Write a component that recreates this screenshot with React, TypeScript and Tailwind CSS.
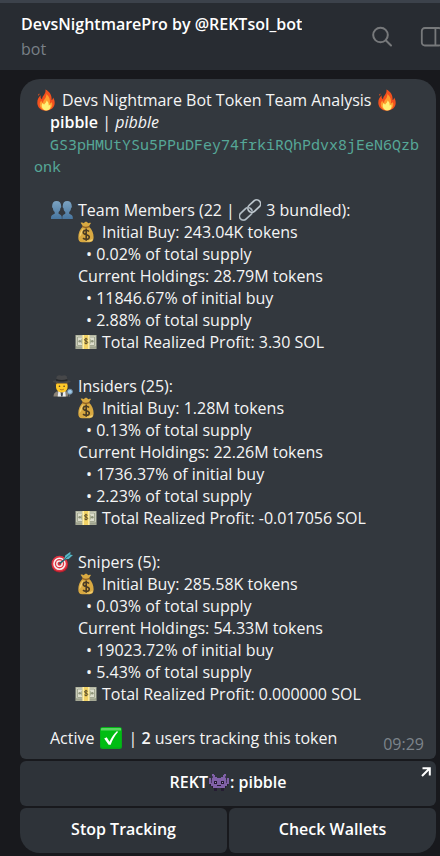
import React from 'react';

interface IconProps {
  className?: string;
}

const Fire: React.FC<IconProps> = ({ className = '' }) => (
  <svg viewBox="0 0 22 22" aria-hidden="true" className={`inline-block h-[22px] w-[22px] shrink-0 ${className}`}>
    <path d="M10.4 0.6c0.6 2.6-0.6 4.3-2 6.2C7.5 8 7 9 7.100 10.300 5.600 9.600 5.300 8 5.800 6.300 3.600 8 2.200 10.700 2.300 14c0.100 4.500 3.700 7.700 8.700 7.700s8.700-3.300 8.700-7.900c0-2.300-0.700-4-1.700-5.400 0 1.300-0.500 2.200-1.400 2.700C17 6.600 14.800 2.700 10.400 0.600z" fill="#f4511e" />
    <path d="M11.300 5c0.500 2.600-1.200 4.400-2.500 6.300-0.500 0.800-0.800 1.700-0.700 2.600-1-0.400-1.600-1.200-1.700-2.300-1.200 1.300-1.700 2.700-1.600 4.200 0.200 3.400 2.900 5.500 6.300 5.500 3.500 0 6.200-2.300 6.200-5.700 0-1-0.200-1.800-0.600-2.500-0.400 0.900-1 1.300-1.900 1.500C15.500 11 14.400 7.300 11.300 5z" fill="#ff9d2e" />
    <path d="M11.500 11.500c0.100 2-1.500 2.700-2.200 4-0.900-0.200-1.300-0.700-1.500-1.400-0.900 1.200-1.200 2.200-1 3.400 0.400 2.400 2 3.900 4.400 3.900s4.300-1.600 4.300-4c0-0.800-0.100-1.300-0.300-1.800-0.400 0.600-0.900 0.900-1.500 0.800 0.200-2-0.600-3.900-2.200-4.900z" fill="#fff176" />
    <path d="M4.300 4.400c0.500 1-0.200 1.500-0.800 2.300C3 5.900 3.300 5 4.300 4.400z" fill="#f4511e" />
  </svg>
);

const People: React.FC<IconProps> = ({ className = '' }) => (
  <svg viewBox="0 0 22 22" aria-hidden="true" className={`inline-block h-[22px] w-[22px] shrink-0 ${className}`}>
    <defs>
      <linearGradient id="people" x1="0" y1="0" x2="0" y2="1">
        <stop offset="0" stopColor="#7ba2c1" />
        <stop offset="1" stopColor="#47759f" />
      </linearGradient>
    </defs>
    <path d="M11.300 20v-1.600c0-2 .8-2.800 3-3.700v-1.600c-1.200-1-1.600-2.300-1.800-3.900-.6-.3-.9-1-.8-1.900.1-3.500 1.700-5.200 4.500-5.200s4.500 1.700 4.600 5.200c.1.900-.2 1.600-.8 1.900-.2 1.600-.6 2.900-1.800 3.900v1.600c2.400.9 3.600 1.700 3.600 3.700V20z" fill="url(#people)" />
    <path d="M0 20v-1.600c0-2 1.300-2.800 3.700-3.700v-1.600c-1.200-1-1.600-2.300-1.800-3.900-.6-.3-.9-1-.8-1.900.1-3.500 1.700-5.200 4.500-5.200s4.500 1.700 4.600 5.200c.1.900-.2 1.600-.8 1.900-.2 1.600-.6 2.900-1.800 3.900v1.600c2.200.9 3.200 1.700 3.200 3.700V20z" fill="url(#people)" />
  </svg>
);

const LinkChain: React.FC<IconProps> = ({ className = '' }) => (
  <svg viewBox="0 0 22 22" aria-hidden="true" className={`inline-block h-[22px] w-[22px] shrink-0 ${className}`}>
    <g fill="none" transform="rotate(-43 11 11)">
      <rect x="-2" y="7" width="14.500" height="8" rx="4" stroke="#737c83" strokeWidth="2" />
      <rect x="-2" y="7" width="14.500" height="8" rx="4" stroke="#b7c1c9" strokeWidth="1.200" />
      <rect x="9.500" y="7" width="14.500" height="8" rx="4" stroke="#737c83" strokeWidth="2" />
      <rect x="9.500" y="7" width="14.500" height="8" rx="4" stroke="#c5cdd4" strokeWidth="1.200" />
    </g>
  </svg>
);

const MoneyBag: React.FC<IconProps> = ({ className = '' }) => (
  <svg viewBox="0 0 22 22" aria-hidden="true" className={`inline-block h-[22px] w-[22px] shrink-0 ${className}`}>
    <path d="M7.900 5.300 5.600 1.800c1.500-.4 2.300-.2 3.300.4.700-1 1.500-1.400 2.200-1.400.8 0 1.400.6 2 1.400 1-.7 1.900-.7 2.900-.3L13.800 5.500c3.300 3 4.800 6.600 4.800 10.800 0 3.200-1.200 4.900-4 4.900H7.200c-2.900 0-3.900-1.700-3.900-4.700 0-4.500 1.600-8.100 4.600-11.200z" fill="#d9a941" />
    <path d="M8.500 7C6.200 9.300 4.700 12.300 4.400 16c2.700-1.500 3-6.200 4.100-9zM17.700 17.600c-1.900 2-5.600 2.600-8.700 2.200 1.200.7 7.700 1.200 8.300-.3z" fill="#f1cf72" />
    <path d="M7.500 5.700c2 .9 4.700.9 6.700 0" stroke="#8f5e21" strokeWidth="1.300" fill="none" strokeLinecap="round" />
    <path d="M14 10.500c-.6-.8-1.600-1.200-2.800-1.200-1.700 0-2.900.8-2.900 2.200 0 1.400 1.200 1.800 3 2.200s3 .9 3 2.300c0 1.400-1.200 2.300-3.100 2.300-1.300 0-2.500-.4-3.100-1.300M11.200 7.600v12.200" stroke="#493b24" strokeWidth="1.600" fill="none" />
  </svg>
);

const Banknote: React.FC<IconProps> = ({ className = '' }) => (
  <svg viewBox="0 0 22 22" aria-hidden="true" className={`inline-block h-[22px] w-[22px] shrink-0 ${className}`}>
    <path d="M0.500 4h21v14h-21z" fill="#b4b7a2" />
    <path d="M1.500 5h19v10.500h-19z" fill="#dddecd" />
    <path d="M2.500 6h17v8.500h-17z" fill="none" stroke="#959b83" strokeWidth="0.800" />
    <path d="M0.500 15.800h21M0.500 17h21" stroke="#7d806d" strokeWidth="0.500" />
    <circle cx="11" cy="10.200" r="5" fill="#a3aa8d" />
    <circle cx="4.700" cy="10.300" r="1.300" fill="#8d9379" />
    <circle cx="17.300" cy="10.300" r="1.300" fill="#8d9379" />
    <path d="M7.600 4h6.800v14H7.600z" fill="#f2d264" />
    <path d="M7.600 4h1.300v14H7.600zM13.200 4h1.200v14h-1.200z" fill="#fff3b1" />
    <path d="M12.600 8.300c-.8-.8-3-.8-3.100.5 0 1.700 3.200.9 3.200 2.600 0 1.400-2.500 1.500-3.300.5M11 6.800v6.500" fill="none" stroke="#594b28" strokeWidth="1" />
  </svg>
);

const Detective: React.FC<IconProps> = ({ className = '' }) => (
  <svg viewBox="0 0 22 22" aria-hidden="true" className={`inline-block h-[22px] w-[22px] shrink-0 ${className}`}>
    <path d="M2.500 21.500c.1-3.500 2.300-5 5.300-5.500h6c3.200.5 5.200 2 5.300 5.500z" fill="#8b8377" />
    <path d="m7.500 15.500 3.300 3.500 3.300-3.500.7 6H6.700z" fill="#eceff1" />
    <path d="m10.800 17.200-1.200 1.300.5 3h1.400l.5-3z" fill="#424b54" />
    <path d="M5 7h11.600v4.700c0 3.400-2.400 5.600-5.800 5.600S5 15.100 5 11.700z" fill="#ffc928" />
    <path d="M4.600 7.200H17v3l-1.300-1.600H5.900l-1.300 1.600z" fill="#604630" />
    <circle cx="8.500" cy="11.300" r=".8" fill="#49372a" />
    <circle cx="13.100" cy="11.300" r=".8" fill="#49372a" />
    <path d="M8.800 14.200c1.300.8 2.700.8 4 0" stroke="#8d5b20" strokeWidth=".8" fill="none" />
    <path d="M5 5.300 5.800 1.300C7.200 0 9.100.2 10.800.8c1.700-.6 3.600-.8 4.900.5l.9 4c2 .3 3.200.7 3.200 1.300 0 2-18 2-18 0 0-.7 1.200-1.100 3.200-1.300z" fill="#464749" />
    <path d="M5.200 4.100c3.200 1.200 8 1.200 11.200 0l.2 1.600c-3.200 1-8.400 1-11.600 0z" fill="#242628" />
    <path d="m18.300 18.900-1 2.900" stroke="#39424a" strokeWidth="1.500" />
    <circle cx="18.900" cy="16.700" r="2.500" fill="#9fc9e9" stroke="#6f8ba0" />
  </svg>
);

const Target: React.FC<IconProps> = ({ className = '' }) => (
  <svg viewBox="0 0 22 22" aria-hidden="true" className={`inline-block h-[22px] w-[22px] shrink-0 ${className}`}>
    <ellipse cx="8.800" cy="13.500" rx="8.300" ry="8" fill="#a91e2c" />
    <circle cx="8.500" cy="12.700" r="7.900" fill="#df3442" />
    <circle cx="8.500" cy="12.700" r="5.500" fill="none" stroke="#f8eeee" strokeWidth="1.600" />
    <circle cx="8.500" cy="12.700" r="2.700" fill="none" stroke="#f8eeee" strokeWidth="1.400" />
    <path d="m8.500 12.700 7.800-6.400" stroke="#27606b" strokeWidth="1.700" />
    <path d="m13.300 8.200.9-3.700L19.500.8l-.3 2.900 2.800.4-4.300 3.800z" fill="#58b7c5" />
    <path d="m14 7.800 6-4.900" stroke="#266f7d" />
  </svg>
);

const CheckMark: React.FC<IconProps> = ({ className = '' }) => (
  <svg viewBox="0 0 22 22" aria-hidden="true" className={`inline-block h-[22px] w-[22px] shrink-0 ${className}`}>
    <rect width="22" height="22" rx="2.500" fill="#07a81b" />
    <rect x=".8" y=".5" width="20.400" height="20" rx="2" fill="#00bd13" />
    <path d="M2 1h18c.7 0 1 .5 1 1v1.500H1V2c0-.5.300-1 1-1z" fill="#5bd562" />
    <path d="m4.200 11.500 2.500-1.200 2.800 4.500c1.900-4.400 4.300-7.900 7.300-10.600l1.400.5c-3.500 4-5.900 8.200-7.500 13H8.600z" fill="#fff" />
  </svg>
);

const Monster: React.FC<IconProps> = ({ className = '' }) => (
  <svg viewBox="0 0 22 22" aria-hidden="true" className={`inline-block h-[22px] w-[22px] shrink-0 ${className}`}>
    <path d="M2 13h18v2h-2v2h-2v2h-3v-2H9v2H6v-2H4v-2H2z" fill="#251c32" />
    <path d="M6 17h3v3H6zM13 17h3v3h-3z" fill="#251c32" />
    <path d="M4 3h2v1h1v2h2v1h4V6h2V4h1V3h2v2h-1v2h1v2h1V7h2v6h-2v2h-2v2H5v-2H3v-2H1V7h2v2h1V7h1V5H4z" fill="#8061a7" />
    <path d="M4 5h1v2H4zM17 5h1v2h-1zM3 9h1v3H3zM18 9h1v3h-1z" fill="#4a3865" />
    <path d="M6 10h3v3H6zM13 10h3v3h-3zM9 14h4v1H9z" fill="#251c32" />
    <path d="M7 11h1v1H7zM14 11h1v1h-1z" fill="#a98bcf" />
  </svg>
);

const SearchIcon = () => (
  <svg viewBox="0 0 22 22" fill="none" stroke="currentColor" strokeWidth="2" strokeLinecap="round" className="h-[22px] w-[22px]">
    <circle cx="8.500" cy="9" r="7.300" />
    <path d="m13.700 14.200 5.300 5.300" />
  </svg>
);

const SidebarIcon = () => (
  <svg viewBox="0 0 24 22" fill="none" stroke="currentColor" strokeWidth="1.800" className="h-[22px] w-6">
    <rect x="1.800" y="2" width="20" height="17.500" rx="3" />
    <path d="M15.400 2v17.500" />
  </svg>
);

interface Group {
  title: React.ReactNode;
  icon: React.ReactNode;
  initial: string;
  initialSupply: string;
  holdings: string;
  ofInitial: string;
  ofSupply: string;
  profit: string;
}

const groups: Group[] = [
  {
    title: (
      <>
        Team Members (22 | <LinkChain className="mr-px -mt-1 align-middle" /> 3 bundled):
      </>
    ),
    icon: <People />,
    initial: '243.04K',
    initialSupply: '0.02%',
    holdings: '28.79M',
    ofInitial: '11846.67%',
    ofSupply: '2.88%',
    profit: '3.30',
  },
  {
    title: 'Insiders (25):',
    icon: <Detective />,
    initial: '1.28M',
    initialSupply: '0.13%',
    holdings: '22.26M',
    ofInitial: '1736.37%',
    ofSupply: '2.23%',
    profit: '-0.017056',
  },
  {
    title: 'Snipers (5):',
    icon: <Target />,
    initial: '285.58K',
    initialSupply: '0.03%',
    holdings: '54.33M',
    ofInitial: '19023.72%',
    ofSupply: '5.43%',
    profit: '0.000000',
  },
];

const HolderGroup: React.FC<{ group: Group }> = ({ group }) => (
  <section className="mt-[22px]">
    <div className="flex gap-[5px] pl-[17px]">
      {group.icon}
      <p>{group.title}</p>
    </div>
    <div className="flex gap-[5px] pl-[41px]">
      <MoneyBag />
      <p>Initial Buy: {group.initial} tokens</p>
    </div>
    <p className="pl-[52px]">• {group.initialSupply} of total supply</p>
    <p className="pl-11">Current Holdings: {group.holdings} tokens</p>
    <p className="pl-[52px]">• {group.ofInitial} of initial buy</p>
    <p className="pl-[52px]">• {group.ofSupply} of total supply</p>
    <div className="flex gap-[5px] pl-[41px]">
      <Banknote />
      <p>Total Realized Profit: {group.profit} SOL</p>
    </div>
  </section>
);

const keyClass = 'h-[45px] bg-[#2e3339] pb-1 font-semibold text-white hover:bg-[#363c43]';

export default function App() {
  return (
    <div className="min-h-screen overflow-hidden bg-[#18191d] font-['Open_Sans','Noto_Sans',sans-serif] text-[16px] leading-[22px] text-[#f5f5f5]">
      <header className="flex h-[70px] justify-between border-t-[3px] border-[#3c424b] bg-[#282c32] pl-[21px]">
        <div className="min-w-0 pt-[10px]">
          <h1 className="truncate font-semibold text-white">DevsNightmarePro by @REKTsol_bot</h1>
          <p className="pt-[3px] text-[#798087]">bot</p>
        </div>
        <div className="-mr-1 flex shrink-0 gap-[26px] pt-[23px] text-[#77797b]">
          <button aria-label="Search" className="h-[22px]">
            <SearchIcon />
          </button>
          <button aria-label="Toggle sidebar" className="h-[22px]">
            <SidebarIcon />
          </button>
        </div>
      </header>

      <main className="pt-[9px] pr-1 pl-5">
        <article className="rounded-t-[20px] rounded-b-[6px] bg-[#33383e] px-[14px] pt-[10px] pb-[10px]">
          <div className="flex gap-[5px] pl-[1px]">
            <Fire />
            <p>Devs Nightmare Bot Token Team Analysis</p>
            <Fire />
          </div>
          <p className="pl-4">
            <strong className="font-semibold text-white">pibble</strong> | <em>pibble</em>
          </p>
          <p className="indent-4 font-['Noto_Sans_Mono','DejaVu_Sans_Mono',monospace] text-[15px] break-all text-[#56a797]">
            GS3pHMUtYSu5PPuDFey74frkiRQhPdvx8jEeN6Qzbonk
          </p>
          {groups.map((group) => (
            <HolderGroup key={group.profit} group={group} />
          ))}
          <div className="mt-[22px] flex justify-between">
            <div className="flex gap-[5px] pl-4">
              <p>Active</p>
              <CheckMark />
              <p className="pl-[2px]">
                | <strong className="font-semibold">2</strong> users tracking this token
              </p>
            </div>
            <time className="-mr-[2px] pt-[6px] -mb-[6px] text-[#7d848b]">09:29</time>
          </div>
        </article>

        <div className="mt-[2px] grid grid-cols-2 gap-[2px]">
          <button className={`${keyClass} relative col-span-2 flex items-center justify-center rounded-[6px]`}>
            REKT
            <Monster />: pibble
            <svg viewBox="0 0 10 10" className="absolute top-[6px] right-[5px] h-[10px] w-[10px]" fill="none" stroke="white" strokeWidth="2">
              <path d="M1.500 1.200h7.300v7.300M8.500 1.500l-7.500 7.500" />
            </svg>
          </button>
          <button className={`${keyClass} rounded-[6px] rounded-bl-[20px]`}>Stop Tracking</button>
          <button className={`${keyClass} rounded-[6px] rounded-br-[20px]`}>Check Wallets</button>
        </div>
      </main>
    </div>
  );
}
